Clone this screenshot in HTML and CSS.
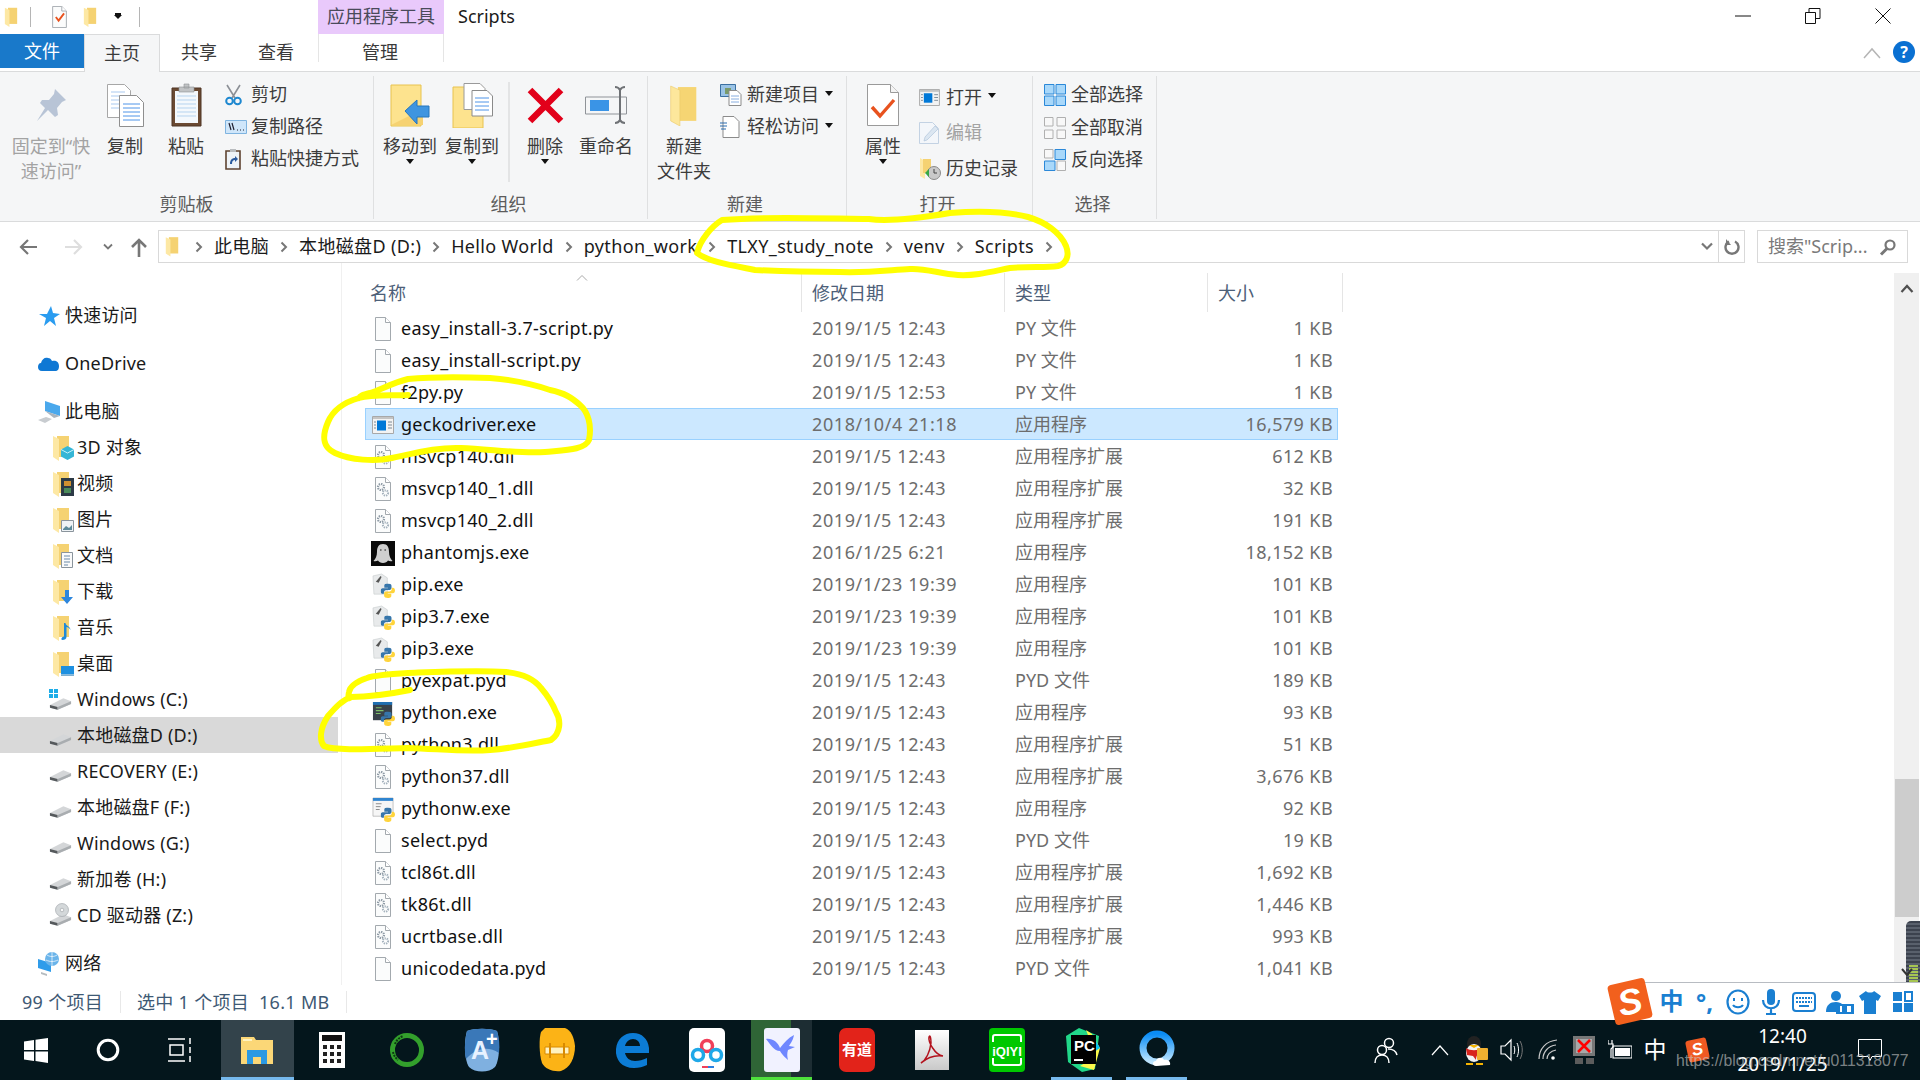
FILE: index.html
```html
<!DOCTYPE html>
<html lang="zh-CN">
<head>
<meta charset="utf-8">
<title>Scripts</title>
<link rel="stylesheet" href="styles.css">
</head>
<body>
<svg class="defs" width="0" height="0" aria-hidden="true">
  <defs>
    <symbol id="folder-v" viewBox="0 0 28 40"><path d="M8 2h18v33H8z" fill="#f6d573"/><path d="M1 1l9 4v35L1 35z" fill="#fde79c" stroke="#eccb6a" stroke-width=".6"/></symbol>
    <symbol id="folder-n" viewBox="0 0 18 26"><path d="M5 1h12v21H5z" fill="#f5d272"/><path d="M1 1l6 3v22l-6-4z" fill="#fde8a4"/></symbol>
    <symbol id="file" viewBox="0 0 18 24"><path d="M1.5.5h10l5 5v18h-15z" fill="#fbfcfc" stroke="#a3a9ae"/><path d="M11.5.5v5h5" fill="#fff" stroke="#a3a9ae"/></symbol>
    <symbol id="dll" viewBox="0 0 18 24"><path d="M1.5.5h10l5 5v18h-15z" fill="#fbfcfc" stroke="#a3a9ae"/><path d="M11.5.5v5h5" fill="#fff" stroke="#a3a9ae"/><circle cx="7" cy="10" r="3" fill="none" stroke="#8f9ba6" stroke-width="2.2" stroke-dasharray="1.4 .9"/><circle cx="11.5" cy="16" r="2.6" fill="none" stroke="#a5b2bd" stroke-width="2" stroke-dasharray="1.3 .9"/></symbol>
    <symbol id="exe" viewBox="0 0 22 18"><path d="M.5.5h21v17H.5z" fill="#f3f3f3" stroke="#a8a8a8"/><path d="M1 1h20v2H1z" fill="#c4c4c4"/><path d="M5 4.500h9v10H5z" fill="#0078d7"/><path d="M16 6h4M16 9h4M16 12h4M2 6h2M2 9h2M2 12h2" stroke="#7c8a96"/></symbol>
    <symbol id="py" viewBox="0 0 14 14"><path d="M7 0C4 0 3.600 1.200 3.600 2.200V4h3.600v.6H2C.8 4.600 0 5.600 0 7.200s.8 2.800 2 2.800h1.200V8.400c0-1.200 1-2.200 2.200-2.200h3.400c1 0 1.800-.8 1.800-1.800V2.200C10.600.8 9 0 7 0z" fill="#3776ab"/><path d="M7 14c3 0 3.400-1.200 3.400-2.200V10H6.800v-.6H12c1.200 0 2-1 2-2.600S13.200 4 12 4h-1.200v1.600c0 1.200-1 2.200-2.200 2.200H5.200c-1 0-1.800.8-1.800 1.800v2.200C3.400 13.200 5 14 7 14z" fill="#ffd43b"/></symbol>
    <symbol id="pip" viewBox="0 0 24 26"><path d="M1 3l9-2 6 4v17H2z" fill="#e8eaeb" stroke="#c4c8cb" stroke-width=".6"/><path d="M4 9l5-6 1 1-3 6z" fill="#555"/><use href="#py" x="9" y="11" width="15" height="15"/></symbol>
    <symbol id="pycon" viewBox="0 0 24 26"><path d="M1 1h20v19H1z" fill="#39424a"/><path d="M1 1h20v3H1z" fill="#1f6fb2"/><path d="M4 7h6M4 10h8M4 13h5" stroke="#7fbf6a" stroke-width="1.300"/><use href="#py" x="9" y="11" width="15" height="15"/></symbol>
    <symbol id="pyw" viewBox="0 0 24 26"><path d="M1 1h21v19H1z" fill="#f6f6f6" stroke="#9a9a9a" stroke-width=".6"/><path d="M1 1h21v3H1z" fill="#2f84cf"/><path d="M4 7h6M4 10h5M4 13h4" stroke="#888"/><use href="#py" x="9" y="11" width="15" height="15"/></symbol>
    <symbol id="ghost" viewBox="0 0 24 25"><path d="M0 0h24v25H0z" fill="#0a0a0a"/><path d="M12 3c-4.500 0-6 3.500-6 8 0 4-1.500 7-3.500 9 2 .5 3.500 0 4.500-.5 1 1.500 2.500 2.500 5 2.500s4-1 5-2.500c1 .5 2.500 1 4.500.5-2-2-3.500-5-3.500-9 0-4.500-1.500-8-6-8z" fill="#cfcfcf"/><circle cx="9.800" cy="9" r=".9" fill="#666"/><circle cx="14.200" cy="9" r=".9" fill="#666"/></symbol>
    <symbol id="drive" viewBox="0 0 24 14"><path d="M1 8l14-7 8 3v3L9 13l-8-2z" fill="#d4d6d8"/><path d="M1 8l8 2v3l-8-2z" fill="#55595c"/><path d="M9 10l14-6v3L9 13z" fill="#a9adb0"/></symbol>
    <symbol id="chev" viewBox="0 0 8 12"><path d="M1.500 1.500L6 6l-4.500 4.500" fill="none" stroke="#777" stroke-width="2"/></symbol>
    <symbol id="grid-s" viewBox="0 0 22 22"><path d="M.5.5h9.500v9.500H.5zM12 .5h9.500v9.500H12zM.5 12h9.500v9.500H.5zM12 12h9.500v9.500H12z" fill="#a9d8fa" stroke="#2b88d8"/></symbol>
    <symbol id="grid-n" viewBox="0 0 22 22"><path d="M.5.5h8.500v8.500H.5zM13 .5h8.500v8.500H13zM.5 13h8.500v8.500H.5zM13 13h8.500v8.500H13z" fill="#f8f8f8" stroke="#b0b0b0"/></symbol>
    <symbol id="grid-i" viewBox="0 0 22 22"><path d="M.5.5h8.500v8.500H.5zM13 12h8.500v9.500H13z" fill="#f8f8f8" stroke="#b0b0b0"/><path d="M11 .5h10.500v10H11zM.5 12h10.500v9.500H.5z" fill="#a9d8fa" stroke="#2b88d8"/></symbol>
  </defs>
</svg>

<header class="titlebar">
  <div class="qa">
    <svg class="qa-f1" width="14" height="20"><use href="#folder-n"/></svg>
    <span class="qa-sep"></span>
    <svg class="qa-doc" width="17" height="22" viewBox="0 0 18 24"><use href="#file"/><path d="M5 12l3 4 6-8" fill="none" stroke="#e8521e" stroke-width="2"/></svg>
    <svg class="qa-f2" width="14" height="20"><use href="#folder-n"/></svg>
    <span class="qa-drop"></span>
    <span class="qa-sep"></span>
  </div>
  <div class="ctx-title">应用程序工具</div>
  <div class="win-title">Scripts</div>
  <div class="winctl">
    <span class="wc"><svg width="16" height="16"><path d="M0 8h16" stroke="#111"/></svg></span>
    <span class="wc"><svg width="16" height="16"><path d="M.5 4.500h10v11H.5zM4 4.500V.5h11v10h-4.500" fill="none" stroke="#111"/></svg></span>
    <span class="wc"><svg width="16" height="16"><path d="M.5.5l15 15M15.500.5l-15 15" stroke="#111"/></svg></span>
  </div>
</header>

<nav class="tabs">
  <div class="tab tab-file">文件</div>
  <div class="tab tab-home">主页</div>
  <div class="tab tab-share">共享</div>
  <div class="tab tab-view">查看</div>
  <div class="tab tab-manage">管理</div>
  <svg class="collapse" width="18" height="12"><path d="M1 11l8-9 8 9" fill="none" stroke="#b5b5b5" stroke-width="1.500"/></svg>
  <span class="help">?</span>
</nav>

<section class="ribbon">
  <div class="group g-clip">
    <div class="group-body">
      <div class="lg w102 off">
        <div class="lg-icon"><svg width="32" height="34" viewBox="0 0 32 34"><path d="M20 1l11 11-4 2-5 6 1 7-3 2-7-7-11 11 8-13-5-5 2-3 7 0 5-6z" fill="#b8c4d6"/></svg></div>
        <div class="lg-label">固定到“快<br>速访问”</div>
      </div>
      <div class="lg w46">
        <div class="lg-icon"><svg width="37" height="43" viewBox="0 0 37 43"><path d="M.5.5h17l6 6v27H.5z" fill="#fff" stroke="#a7a7a7"/><path d="M4 8h14M4 12h16M4 16h16M4 20h16M4 24h16" stroke="#a9c9ef"/><path d="M12.500 11.500h17l7 7v24h-24z" fill="#fff" stroke="#8f8f8f"/><path d="M16 20h17M16 24h17M16 28h17M16 32h17M16 36h17" stroke="#4f94e8"/></svg></div>
        <div class="lg-label">复制</div>
      </div>
      <div class="lg w76">
        <div class="lg-icon"><svg width="31" height="44" viewBox="0 0 31 44"><path d="M1 5h29v38H1z" fill="#6b4a33" stroke="#4e3524"/><path d="M4 8h23v32H4z" fill="#f4f8fc"/><path d="M6 13h19M6 17h19M6 21h19M6 25h19M6 29h19M6 33h19" stroke="#b5d3ef"/><path d="M8 4h15v5H8zM13 1h5v4h-5z" fill="#c1c3c5" stroke="#8f9193" stroke-width=".6"/></svg></div>
        <div class="lg-label">粘贴</div>
      </div>
      <div class="stack st-clip">
        <div class="sm"><span class="sm-icon"><svg width="17" height="22" viewBox="0 0 17 22"><path d="M2 1l8 13M15 1L7 14" stroke="#8c9096" stroke-width="1.600"/><circle cx="4.500" cy="17" r="3.300" fill="none" stroke="#1e88d0" stroke-width="2"/><circle cx="12.500" cy="17" r="3.300" fill="none" stroke="#1e88d0" stroke-width="2"/></svg></span>剪切</div>
        <div class="sm"><span class="sm-icon"><svg width="22" height="14" viewBox="0 0 22 14"><path d="M.5.5h21v13H.5z" fill="#cfe6fa" stroke="#7fb4e0"/><path d="M4 3l2 7M7 3l2 7" stroke="#223" stroke-width="1.200"/><path d="M12 10h1M15 10h1M18 10h1" stroke="#223"/></svg></span>复制路径</div>
        <div class="sm"><span class="sm-icon"><svg width="16" height="22" viewBox="0 0 16 22"><path d="M1 3h14v18H1z" fill="#eef3f8" stroke="#5e4330" stroke-width="1.600"/><path d="M5 1h6v3H5z" fill="#b9bcbf"/><path d="M5 16c0-4 2-6 5-6V8l3 3-3 3v-2c-2 0-3 1-3 4z" fill="#2a5a9e"/></svg></span>粘贴快捷方式</div>
      </div>
    </div>
    <div class="group-label">剪贴板</div>
  </div>

  <div class="group g-org">
    <div class="group-body">
      <div class="lg w72">
        <div class="lg-icon"><svg width="40" height="43" viewBox="0 0 40 43"><path d="M1 1h30v41H1z" fill="#fde38e" stroke="#e8c34e"/><path d="M23 30h10v11H1" fill="#f6d272"/><path d="M15 27L27 16v6h12v11H27v7z" fill="#3f95e0" stroke="#2676bd"/></svg></div>
        <div class="lg-label">移动到</div><span class="caret"></span>
      </div>
      <div class="lg w52">
        <div class="lg-icon"><svg width="41" height="45" viewBox="0 0 41 45"><path d="M1 4h30v41H1z" fill="#fde38e" stroke="#e8c34e"/><path d="M12 .5h16l5 5v21H12z" fill="#fff" stroke="#9a9a9a"/><path d="M20 7.500h15l5.500 5.500v20H20z" fill="#fff" stroke="#8a8a8a"/><path d="M23 15h14M23 19h14M23 23h14M23 27h14" stroke="#4f94e8"/></svg></div>
        <div class="lg-label">复制到</div><span class="caret"></span>
      </div>
      <span class="inner-sep"></span>
      <div class="lg w70">
        <div class="lg-icon"><svg width="37" height="37" viewBox="0 0 37 37"><path d="M3 3l31 31M34 3L3 34" stroke="#e2001a" stroke-width="6.500"/></svg></div>
        <div class="lg-label">删除</div><span class="caret"></span>
      </div>
      <div class="lg w52">
        <div class="lg-icon"><svg width="42" height="38" viewBox="0 0 42 38"><path d="M.5 11h41v17H.5z" fill="#f5f6f7" stroke="#8f9398"/><path d="M5 14h19v11H5z" fill="#3a94e6"/><path d="M30 1c2 0 4 1 5 3v30c-1 2-3 3-5 3M40 1c-2 0-4 1-5 3v30c1 2 3 3 5 3" fill="none" stroke="#6f7276" stroke-width="2"/></svg></div>
        <div class="lg-label">重命名</div>
      </div>
    </div>
    <div class="group-label">组织</div>
  </div>

  <div class="group g-new">
    <div class="group-body">
      <div class="lg w72">
        <div class="lg-icon"><svg width="30" height="41"><use href="#folder-v"/></svg></div>
        <div class="lg-label">新建<br>文件夹</div>
      </div>
      <div class="stack st-new">
        <div class="sm"><span class="sm-icon"><svg width="22" height="22" viewBox="0 0 22 22"><path d="M.5.5h15v12H.5z" fill="#9ac3e6" stroke="#3b6fa0"/><path d="M5 4h6v6H5z" fill="#7a9a6a"/><path d="M9 6.500h8l4 4v11H9z" fill="#fff" stroke="#8b8b8b"/><path d="M11 12h8M11 15h8M11 18h8" stroke="#88aee0"/></svg></span>新建项目<span class="caret caret-in"></span></div>
        <div class="sm"><span class="sm-icon"><svg width="20" height="22" viewBox="0 0 20 22"><path d="M3 .5h11l5 5v16H3z" fill="#fff" stroke="#8b8b8b"/><path d="M0 7h7M0 10h7M1 13h5" stroke="#2a6db0"/></svg></span>轻松访问<span class="caret caret-in"></span></div>
      </div>
    </div>
    <div class="group-label">新建</div>
  </div>

  <div class="group g-open">
    <div class="group-body">
      <div class="lg w72">
        <div class="lg-icon"><svg width="32" height="42" viewBox="0 0 32 42"><path d="M.5.5h23l8 8v33H.5z" fill="#fff" stroke="#9a9a9a"/><path d="M23.500.5v8h8" fill="#f4f4f4" stroke="#9a9a9a"/><path d="M5 23l8 9 14-16" fill="none" stroke="#e8521e" stroke-width="3.400"/></svg></div>
        <div class="lg-label">属性</div><span class="caret"></span>
      </div>
      <div class="stack st-open">
        <div class="sm sm-t"><span class="sm-icon"><svg width="21" height="17"><use href="#exe"/></svg></span>打开<span class="caret caret-in"></span></div>
        <div class="sm sm-t off"><span class="sm-icon"><svg width="20" height="22" viewBox="0 0 20 22"><path d="M.5.5h13l6 6v15H.5z" fill="#f3f6fa" stroke="#c3d2e3"/><path d="M5 19l1-4L16 4l3 3L8 18z" fill="#dbe6f1" stroke="#aac0d6" stroke-width=".6"/></svg></span>编辑</div>
        <div class="sm sm-t"><span class="sm-icon"><svg width="22" height="22" viewBox="0 0 22 22"><path d="M1 0l5 3v18l-5-3z" fill="#fde8a4"/><path d="M4 1h8v14H4z" fill="#f5d272"/><circle cx="15" cy="15" r="6.500" fill="#c9c9c9" stroke="#8a8a8a"/><path d="M15 11v4h3" stroke="#444" fill="none"/><path d="M6 15l4-4v8z" fill="#39a845"/></svg></span>历史记录</div>
      </div>
    </div>
    <div class="group-label">打开</div>
  </div>

  <div class="group g-sel">
    <div class="group-body">
      <div class="stack st-new st-sel">
        <div class="sm"><span class="sm-icon"><svg width="22" height="22"><use href="#grid-s"/></svg></span>全部选择</div>
        <div class="sm"><span class="sm-icon"><svg width="22" height="22"><use href="#grid-n"/></svg></span>全部取消</div>
        <div class="sm"><span class="sm-icon"><svg width="22" height="22"><use href="#grid-i"/></svg></span>反向选择</div>
      </div>
    </div>
    <div class="group-label">选择</div>
  </div>
</section>

<div class="addr">
  <svg class="nav-btn back" width="20" height="18" viewBox="0 0 20 18"><path d="M19 9H3M10 2L3 9l7 7" fill="none" stroke="#777" stroke-width="2.200"/></svg>
  <svg class="nav-btn fwd" width="20" height="18" viewBox="0 0 20 18"><path d="M1 9h16M10 2l7 7-7 7" fill="none" stroke="#dedede" stroke-width="2.200"/></svg>
  <svg class="nav-btn hist" width="10" height="8" viewBox="0 0 10 8"><path d="M1 1.500l4 4 4-4" fill="none" stroke="#777" stroke-width="1.800"/></svg>
  <svg class="nav-btn up" width="18" height="20" viewBox="0 0 18 20"><path d="M9 20V3M2 10l7-7 7 7" fill="none" stroke="#777" stroke-width="2.600"/></svg>
  <div class="crumbs">
    <svg class="cr-folder" width="14" height="21"><use href="#folder-n"/></svg>
    <svg class="cr-chev" width="8" height="12"><use href="#chev"/></svg>
    <span>此电脑</span>
    <svg class="cr-chev" width="8" height="12"><use href="#chev"/></svg>
    <span>本地磁盘D (D:)</span>
    <svg class="cr-chev" width="8" height="12"><use href="#chev"/></svg>
    <span>Hello World</span>
    <svg class="cr-chev" width="8" height="12"><use href="#chev"/></svg>
    <span>python_work</span>
    <svg class="cr-chev" width="8" height="12"><use href="#chev"/></svg>
    <span>TLXY_study_note</span>
    <svg class="cr-chev" width="8" height="12"><use href="#chev"/></svg>
    <span>venv</span>
    <svg class="cr-chev" width="8" height="12"><use href="#chev"/></svg>
    <span>Scripts</span>
    <svg class="cr-chev" width="8" height="12"><use href="#chev"/></svg>
    <svg class="cr-drop" width="12" height="9" viewBox="0 0 12 9"><path d="M1 1.500l5 5 5-5" fill="none" stroke="#777" stroke-width="2.200"/></svg>
    <span class="cr-refresh"><svg width="16" height="18" viewBox="0 0 16 18"><path d="M5 3.500a6.500 6.500 0 1 0 6 0" fill="none" stroke="#777" stroke-width="2.400"/><path d="M2 1v6h5z" fill="#777"/></svg></span>
  </div>
  <div class="search">
    <span>搜索"Scrip...</span>
    <svg width="18" height="18" viewBox="0 0 18 18"><circle cx="11" cy="7" r="4.500" fill="none" stroke="#777" stroke-width="2.200"/><path d="M8 10.500L2 16.500" stroke="#777" stroke-width="3"/></svg>
  </div>
</div>

<main class="main">
  <aside class="side">
    <div class="si top"><svg class="si-i" width="22" height="20" viewBox="0 0 22 20"><path d="M13 0l2 7 7 1-6 4 2 8-6-5-6 5 2-8-7-4h8z" fill="#2a9cf0"/></svg>快速访问</div>
    <div class="si top"><svg class="si-i" width="22" height="16" viewBox="0 0 22 16"><path d="M4 15C1 15 0 13 0 11s1-4 3-4c1-4 4-6 7-5 2 0 3 1 4 3 3-1 7 0 7 5 0 3-1 5-4 5z" fill="#0f78d4"/></svg>OneDrive</div>
    <div class="si top"><svg class="si-i" width="22" height="22" viewBox="0 0 22 22"><path d="M7 0l15 5v10L7 10z" fill="#4aa8ec"/><path d="M7 10l15 5-6 2z" fill="#aab4bd"/><path d="M0 19l8-3 6 2-7 4z" fill="#c8ccd0"/></svg>此电脑</div>
    <div class="si"><span class="fold"><svg width="18" height="26"><use href="#folder-n"/></svg><svg class="badge" width="13" height="14" viewBox="0 0 13 14"><path d="M6.500 0L13 3.500v7L6.500 14 0 10.500v-7z" fill="#35b6d6"/><path d="M0 3.500l6.500 3.500L13 3.500" fill="none" stroke="#c9f1fa"/></svg></span>3D 对象</div>
    <div class="si"><span class="fold"><svg width="18" height="26"><use href="#folder-n"/></svg><svg class="badge" width="13" height="18" viewBox="0 0 13 18"><path d="M0 0h13v18H0z" fill="#2c3a46"/><path d="M3 3h7v5H3z" fill="#d09030"/><path d="M3 10h7v5H3z" fill="#4a8a5a"/></svg></span>视频</div>
    <div class="si"><span class="fold"><svg width="18" height="26"><use href="#folder-n"/></svg><svg class="badge" width="13" height="12" viewBox="0 0 13 12"><path d="M.5.5h12v11H.5z" fill="#eef2f5" stroke="#8a949c"/><path d="M2 9l3-3 3 2 3-3v5H2z" fill="#5c8a9a"/></svg></span>图片</div>
    <div class="si"><span class="fold"><svg width="18" height="26"><use href="#folder-n"/></svg><svg class="badge" width="12" height="16" viewBox="0 0 12 16"><path d="M.5.5h11v15H.5z" fill="#fafafa" stroke="#8a949c"/><path d="M3 4h6M3 7h6M3 10h6M3 13h4" stroke="#6a8aa8"/></svg></span>文档</div>
    <div class="si"><span class="fold"><svg width="18" height="26"><use href="#folder-n"/></svg><svg class="badge" width="12" height="14" viewBox="0 0 12 14"><path d="M4 0h4v7h4l-6 7-6-7h4z" fill="#2d86dc"/></svg></span>下载</div>
    <div class="si"><span class="fold"><svg width="18" height="26"><use href="#folder-n"/></svg><svg class="badge" width="10" height="18" viewBox="0 0 10 18"><path d="M3 1h1.500c0 3 5 3 5 7-1-2-2.500-3-4-3v10c0 2-2 3-4 3-1.500 0-1.500-2 0-3 1-.5 1.500-.5 1.500-.5z" fill="#1f8ad8"/></svg></span>音乐</div>
    <div class="si"><span class="fold"><svg width="18" height="26"><use href="#folder-n"/></svg><svg class="badge" width="13" height="10" viewBox="0 0 13 10"><path d="M0 0h13v8.500H0z" fill="#1e90e0"/><path d="M0 8.500h13V10H0z" fill="#7fb0d0"/></svg></span>桌面</div>
    <div class="si"><span class="fold"><svg class="drv" width="23" height="14"><use href="#drive"/></svg><svg class="badge-win" width="9" height="9" viewBox="0 0 9 9"><path d="M0 0h4v4H0zM5 0h4v4H5zM0 5h4v4H0zM5 5h4v4H5z" fill="#1dade8"/></svg></span>Windows (C:)</div>
    <div class="si sel"><span class="fold"><svg class="drv" width="23" height="14"><use href="#drive"/></svg></span>本地磁盘D (D:)</div>
    <div class="si"><span class="fold"><svg class="drv" width="23" height="14"><use href="#drive"/></svg></span>RECOVERY (E:)</div>
    <div class="si"><span class="fold"><svg class="drv" width="23" height="14"><use href="#drive"/></svg></span>本地磁盘F (F:)</div>
    <div class="si"><span class="fold"><svg class="drv" width="23" height="14"><use href="#drive"/></svg></span>Windows (G:)</div>
    <div class="si"><span class="fold"><svg class="drv" width="23" height="14"><use href="#drive"/></svg></span>新加卷 (H:)</div>
    <div class="si"><span class="fold"><svg class="drv" width="23" height="14"><use href="#drive"/></svg><svg class="badge-cd" width="14" height="14" viewBox="0 0 14 14"><circle cx="7" cy="7" r="6.500" fill="#d4d8da" stroke="#9aa0a4" stroke-width=".6"/><circle cx="7" cy="7" r="1.800" fill="#f7f7f7" stroke="#9aa0a4" stroke-width=".6"/></svg></span>CD 驱动器 (Z:)</div>
    <div class="si top"><svg class="si-i" width="22" height="26" viewBox="0 0 22 26"><path d="M0 8l13 4v9L0 17z" fill="#2f9cea"/><circle cx="14" cy="8" r="7" fill="#6ab4ea"/><path d="M9 4c3 2 7 2 10 0M8 9c4 2 8 2 12 0M14 1v14" stroke="#fff" stroke-width=".7" fill="none"/><path d="M3 21l6 2v2l-6-2z" fill="#b6bcc0"/></svg>网络</div>
  </aside>

  <div class="list">
    <div class="head">
      <div class="hc hc-name">名称<svg class="sort" width="12" height="6" viewBox="0 0 12 6"><path d="M1 5.500l5-5 5 5" fill="none" stroke="#a8a8a8"/></svg></div>
      <div class="hc">修改日期</div>
      <div class="hc">类型</div>
      <div class="hc">大小</div>
    </div>
    <div class="row"><span class="nm"><span class="ic"><svg width="18" height="24"><use href="#file"/></svg></span>easy_install-3.7-script.py</span><span class="dt">2019/1/5 12:43</span><span>PY 文件</span><span class="sz">1 KB</span></div>
    <div class="row"><span class="nm"><span class="ic"><svg width="18" height="24"><use href="#file"/></svg></span>easy_install-script.py</span><span class="dt">2019/1/5 12:43</span><span>PY 文件</span><span class="sz">1 KB</span></div>
    <div class="row"><span class="nm"><span class="ic"><svg width="18" height="24"><use href="#file"/></svg></span>f2py.py</span><span class="dt">2019/1/5 12:53</span><span>PY 文件</span><span class="sz">1 KB</span></div>
    <div class="row chosen"><span class="nm"><span class="ic"><svg width="22" height="18"><use href="#exe"/></svg></span>geckodriver.exe</span><span class="dt">2018/10/4 21:18</span><span>应用程序</span><span class="sz">16,579 KB</span></div>
    <div class="row"><span class="nm"><span class="ic"><svg width="18" height="24"><use href="#dll"/></svg></span>msvcp140.dll</span><span class="dt">2019/1/5 12:43</span><span>应用程序扩展</span><span class="sz">612 KB</span></div>
    <div class="row"><span class="nm"><span class="ic"><svg width="18" height="24"><use href="#dll"/></svg></span>msvcp140_1.dll</span><span class="dt">2019/1/5 12:43</span><span>应用程序扩展</span><span class="sz">32 KB</span></div>
    <div class="row"><span class="nm"><span class="ic"><svg width="18" height="24"><use href="#dll"/></svg></span>msvcp140_2.dll</span><span class="dt">2019/1/5 12:43</span><span>应用程序扩展</span><span class="sz">191 KB</span></div>
    <div class="row"><span class="nm"><span class="ic"><svg width="24" height="25"><use href="#ghost"/></svg></span>phantomjs.exe</span><span class="dt">2016/1/25 6:21</span><span>应用程序</span><span class="sz">18,152 KB</span></div>
    <div class="row"><span class="nm"><span class="ic"><svg width="23" height="25"><use href="#pip"/></svg></span>pip.exe</span><span class="dt">2019/1/23 19:39</span><span>应用程序</span><span class="sz">101 KB</span></div>
    <div class="row"><span class="nm"><span class="ic"><svg width="23" height="25"><use href="#pip"/></svg></span>pip3.7.exe</span><span class="dt">2019/1/23 19:39</span><span>应用程序</span><span class="sz">101 KB</span></div>
    <div class="row"><span class="nm"><span class="ic"><svg width="23" height="25"><use href="#pip"/></svg></span>pip3.exe</span><span class="dt">2019/1/23 19:39</span><span>应用程序</span><span class="sz">101 KB</span></div>
    <div class="row"><span class="nm"><span class="ic"><svg width="18" height="24"><use href="#file"/></svg></span>pyexpat.pyd</span><span class="dt">2019/1/5 12:43</span><span>PYD 文件</span><span class="sz">189 KB</span></div>
    <div class="row"><span class="nm"><span class="ic"><svg width="23" height="25"><use href="#pycon"/></svg></span>python.exe</span><span class="dt">2019/1/5 12:43</span><span>应用程序</span><span class="sz">93 KB</span></div>
    <div class="row"><span class="nm"><span class="ic"><svg width="18" height="24"><use href="#dll"/></svg></span>python3.dll</span><span class="dt">2019/1/5 12:43</span><span>应用程序扩展</span><span class="sz">51 KB</span></div>
    <div class="row"><span class="nm"><span class="ic"><svg width="18" height="24"><use href="#dll"/></svg></span>python37.dll</span><span class="dt">2019/1/5 12:43</span><span>应用程序扩展</span><span class="sz">3,676 KB</span></div>
    <div class="row"><span class="nm"><span class="ic"><svg width="23" height="25"><use href="#pyw"/></svg></span>pythonw.exe</span><span class="dt">2019/1/5 12:43</span><span>应用程序</span><span class="sz">92 KB</span></div>
    <div class="row"><span class="nm"><span class="ic"><svg width="18" height="24"><use href="#file"/></svg></span>select.pyd</span><span class="dt">2019/1/5 12:43</span><span>PYD 文件</span><span class="sz">19 KB</span></div>
    <div class="row"><span class="nm"><span class="ic"><svg width="18" height="24"><use href="#dll"/></svg></span>tcl86t.dll</span><span class="dt">2019/1/5 12:43</span><span>应用程序扩展</span><span class="sz">1,692 KB</span></div>
    <div class="row"><span class="nm"><span class="ic"><svg width="18" height="24"><use href="#dll"/></svg></span>tk86t.dll</span><span class="dt">2019/1/5 12:43</span><span>应用程序扩展</span><span class="sz">1,446 KB</span></div>
    <div class="row"><span class="nm"><span class="ic"><svg width="18" height="24"><use href="#dll"/></svg></span>ucrtbase.dll</span><span class="dt">2019/1/5 12:43</span><span>应用程序扩展</span><span class="sz">993 KB</span></div>
    <div class="row"><span class="nm"><span class="ic"><svg width="18" height="24"><use href="#file"/></svg></span>unicodedata.pyd</span><span class="dt">2019/1/5 12:43</span><span>PYD 文件</span><span class="sz">1,041 KB</span></div>
  </div>

  <div class="vscroll">
    <svg class="vs-up" width="14" height="9" viewBox="0 0 14 9"><path d="M1.500 8L7 2l5.500 6" fill="none" stroke="#505050" stroke-width="2.200"/></svg>
    <div class="vs-thumb"></div>
  </div>
</main>

<footer class="status">
  <span class="st-a">99 个项目</span>
  <span class="st-b">选中 1 个项目&nbsp;&nbsp;16.1 MB</span>
</footer>

<div class="taskbar">
  <span class="tb s72"><svg width="24" height="25" viewBox="0 0 24 25"><path d="M0 3.500l10-1.500v10H0zM11.500 1.800L24 0v12H11.500zM0 13.500h10V23L0 21.500zM11.500 13.500H24V25l-12.500-2z" fill="#fff"/></svg></span>
  <span class="tb s72"><svg width="24" height="24" viewBox="0 0 24 24"><circle cx="12" cy="12" r="9.800" fill="none" stroke="#fff" stroke-width="3"/></svg></span>
  <span class="tb s77"><svg width="24" height="24" viewBox="0 0 24 24"><path d="M0 1h17M0 23h17M2 7h13v10H2zM22 0v6M22 9v6M22 18v6" fill="none" stroke="#fff" stroke-width="1.500"/></svg></span>
  <span class="tb s73 active-exp"><svg width="32" height="28" viewBox="0 0 32 28"><path d="M0 1h13l2 3h17v24H0z" fill="#fbd777"/><path d="M2 3h9v2H2z" fill="#fff3c0"/><path d="M6 28V14h20v14h-6v-7h-8v7z" fill="#2b99e3"/></svg></span>
  <span class="tb"><svg width="26" height="36" viewBox="0 0 26 36"><path d="M0 0h26v36H0z" fill="#fff"/><path d="M3 3h20v6H3z" fill="#111"/><path d="M4 13h4v4H4zM11 13h4v4h-4zM18 13h4v4h-4zM4 20h4v4H4zM11 20h4v4h-4zM18 20h4v4h-4zM4 27h4v4H4zM11 27h4v4h-4zM18 27h4v4h-4z" fill="#222"/></svg></span>
  <span class="tb"><svg width="36" height="36" viewBox="0 0 36 36"><circle cx="18" cy="18" r="14.500" fill="none" stroke="#33a02c" stroke-width="5"/><path d="M6 12a14 14 0 0 1 8-8M4 20a14 14 0 0 0 5 8" stroke="#0d3a12" stroke-width="2" fill="none" stroke-dasharray="2 1"/></svg></span>
  <span class="tb"><svg width="36" height="44" viewBox="0 0 36 44"><path d="M3 3C10 0 26 0 33 3c3 10 3 28-2 36-6 6-20 6-26 0C0 31 0 13 3 3z" fill="#7fb0e0"/><path d="M3 3c7-3 23-3 30 0 2 6 3 14 2 22-12-8-24-4-33 6-2-9-1-20 1-28z" fill="#3a78b8"/><text x="7" y="31" class="ti ti-a">A</text><text x="22" y="18" class="ti ti-p">+</text></svg></span>
  <span class="tb"><svg width="36" height="44" viewBox="0 0 36 44"><path d="M6 0h20c6 2 9 9 10 18 0 12-5 22-14 25-8 1-16-2-19-8C0 26 0 10 2 4z" fill="#fcb316"/><path d="M6 19h24v7H6z" fill="#fff2c0"/><path d="M11 15v15M25 15v15" stroke="#d88a00" stroke-width="2"/><path d="M6 19h24v7H6z" fill="none" stroke="#d88a00"/></svg></span>
  <span class="tb"><svg width="36" height="36" viewBox="0 0 36 36"><path d="M2 17C3 7 10 1 19 1c9 0 15 6 16 15v5H11c1 5 5 8 10 8 4 0 8-1 12-3v7c-4 2-8 3-13 3C8 36 1 28 2 17zm9-3h15c0-4-3-7-7-7s-7 3-8 7z" fill="#0c7cd5"/></svg></span>
  <span class="tb"><svg width="36" height="44" viewBox="0 0 36 44"><rect width="36" height="44" rx="5" fill="#fff"/><circle cx="18" cy="18" r="5.500" fill="none" stroke="#f0405a" stroke-width="3.500"/><circle cx="9" cy="27" r="5.500" fill="none" stroke="#1fa8e8" stroke-width="3.500"/><circle cx="27" cy="27" r="5.500" fill="none" stroke="#1fa8e8" stroke-width="3.500"/><path d="M13 38h6v2h-6z" fill="#f0405a"/><path d="M19 38h6v2h-6z" fill="#2a7fe0"/></svg></span>
  <span class="tb"><span class="tb-mark mark-green"><svg width="36" height="44" viewBox="0 0 36 44"><rect width="36" height="44" rx="3" fill="#f1f2ff"/><path d="M2 11c6-1 12 3 14 9 4-5 8-10 14-13-1 6-4 9-5 11l6 1-7 3c-1 3-1 6 0 10-3-3-5-4-8-9-6 0-9-6-14-12z" fill="#6f87ff"/></svg></span></span>
  <span class="tb"><svg width="36" height="44" viewBox="0 0 36 44"><rect width="36" height="44" rx="7" fill="#e2231a"/><text x="18" y="27" text-anchor="middle" class="ti ti-yd">有道</text></svg></span>
  <span class="tb"><svg width="34" height="40" viewBox="0 0 34 40"><defs><linearGradient id="acro" x1="0" y1="0" x2="0" y2="1"><stop offset="0" stop-color="#fff"/><stop offset="1" stop-color="#c9c9c9"/></linearGradient></defs><path d="M0 0h34v40H0z" fill="url(#acro)"/><path d="M6 33c5-3 9-11 10-20 0-5-1-9-2-6-1 5 6 18 14 19-7-1-15 1-22 7z" fill="none" stroke="#b3121d" stroke-width="1.500"/></svg></span>
  <span class="tb"><svg width="36" height="44" viewBox="0 0 36 44"><rect width="36" height="44" rx="4" fill="#00c800"/><path d="M4 14V9c0-1 1-2 2-2h24c1 0 2 1 2 2v5M4 30v5c0 1 1 2 2 2h24c1 0 2-1 2-2v-5" fill="none" stroke="#fff" stroke-width="2"/><text x="18" y="28" text-anchor="middle" class="ti ti-iq">iQIYI</text></svg></span>
  <span class="tb"><span class="tb-mark mark-blue"><svg width="36" height="44" viewBox="0 0 36 44"><path d="M2 8L15 0l20 8-4 33-13 3L4 34z" fill="#21d789"/><path d="M22 2l6 4 8 14-6 22-14-4 16-10z" fill="#fcf84a"/><path d="M28 6l8 14-6 4z" fill="#07c3f2"/><path d="M7 7h25v29H7z" fill="#000"/><text x="10" y="23" class="ti ti-pc">PC</text><path d="M10 31h9v2h-9z" fill="#fff"/></svg></span></span>
  <span class="tb"><span class="tb-mark mark-blue"><svg width="36" height="44" viewBox="0 0 36 44"><defs><linearGradient id="qg" x1="0" y1="0" x2="0" y2="1"><stop offset="0" stop-color="#0a8cf5"/><stop offset="1" stop-color="#bfe6ff"/></linearGradient></defs><circle cx="18" cy="20" r="14" fill="none" stroke="url(#qg)" stroke-width="7"/><path d="M17 38c-4 0-4-5 0-5 1-4 7-4 8-1 4-1 7 2 6 5z" fill="#fff"/></svg></span></span>

  <div class="tray">
    <span class="tr mr18"><svg width="24" height="27" viewBox="0 0 24 27"><circle cx="15" cy="6" r="4.500" fill="none" stroke="#fff" stroke-width="1.500"/><circle cx="8" cy="13" r="4.500" fill="none" stroke="#fff" stroke-width="1.500"/><path d="M1 26c0-5 3-8 7-8s7 3 7 8M14 12c4 0 8 2 9 6" fill="none" stroke="#fff" stroke-width="1.500"/></svg></span>
    <span class="tr"><svg width="18" height="11" viewBox="0 0 18 11"><path d="M1 10l8-9 8 9" fill="none" stroke="#fff" stroke-width="1.200"/></svg></span>
    <span class="tr"><svg width="24" height="30" viewBox="0 0 24 30"><ellipse cx="10" cy="9" rx="7" ry="8" fill="#222"/><ellipse cx="10" cy="18" rx="8" ry="9" fill="#f4f4f4"/><path d="M2 13c4 3 12 3 16 0v4c-4 2-6 3-6 8l-3-4-6-1z" fill="#d8241c"/><path d="M5 10h10l-5 3z" fill="#f5b301"/><path d="M2 29h7M12 29h7" stroke="#f5b301" stroke-width="2"/><rect x="13" y="13" width="11" height="12" rx="1" fill="#f0b030"/></svg></span>
    <span class="tr"><svg width="24" height="24" viewBox="0 0 24 24"><path d="M1 8h4l6-6v20l-6-6H1z" fill="none" stroke="#fff" stroke-width="1.200"/><path d="M14 8c1 2 1 6 0 8M17 5c2 4 2 10 0 14" fill="none" stroke="#fff"/><path d="M20 3c3 5 3 13 0 18" fill="none" stroke="#777"/></svg></span>
    <span class="tr"><svg width="20" height="22" viewBox="0 0 20 22"><path d="M1 20C1 10 8 2 19 1M5 20c0-7 5-13 13-14M9 20c0-4 3-8 9-9" fill="none" stroke="#c8c8c8" stroke-width="1.200"/><circle cx="15" cy="19" r="1.800" fill="#fff"/></svg></span>
    <span class="tr"><svg width="22" height="29" viewBox="0 0 22 29"><path d="M0 0h22v20H0z" fill="#777"/><path d="M3 3h16v14H3z" fill="#a8a8a8"/><path d="M5 4l12 12M17 4L5 16" stroke="#f00" stroke-width="2.500"/><path d="M2 22h8v6H2zM13 22h8v6h-8z" fill="#5c5c5c"/></svg></span>
    <span class="tr"><svg width="24" height="20" viewBox="0 0 24 20"><path d="M5 6h19v12H5z" fill="none" stroke="#fff" stroke-width="1.200"/><path d="M7 8h15v8H7z" fill="#fff"/><path d="M0 0v4M4 0v4M-1 4h6v3l-2 2v9" fill="none" stroke="#fff" stroke-width="1.200"/></svg></span>
    <span class="tr tr-ime mr7">中</span>
    <span class="tr mr15"><span class="s-mini">S</span></span>
    <div class="clock"><span>12:40</span><span>2019/1/25</span></div>
    <span class="tr"><svg width="24" height="22" viewBox="0 0 24 22"><path d="M.5.5h23v17H14l-2 4-2-4H.5z" fill="none" stroke="#fff"/></svg></span>
  </div>
</div>

<div class="gadget"></div>
<svg class="gadget-v" width="12" height="9" viewBox="0 0 12 9"><path d="M1 1l5 6 5-6" fill="none" stroke="#333" stroke-width="2"/></svg>

<div class="sogou">
  <span class="sg-logo">S</span>
  <span class="sg sg-zh">中</span>
  <span class="sg sg-p">°,</span>
  <span class="sg"><svg width="24" height="26" viewBox="0 0 24 26"><ellipse cx="12" cy="13" rx="10.500" ry="11.500" fill="none" stroke="#1a7fd1" stroke-width="2.200"/><path d="M8 9v3M16 9v3" stroke="#1a7fd1" stroke-width="2"/><path d="M7 16c2 3 8 3 10 0" fill="none" stroke="#1a7fd1" stroke-width="2"/></svg></span>
  <span class="sg"><svg width="20" height="26" viewBox="0 0 20 26"><rect x="6" y="0" width="8" height="16" rx="4" fill="#1a7fd1"/><path d="M2 11c0 11 16 11 16 0M10 19v5M5 25h10" fill="none" stroke="#1a7fd1" stroke-width="2.200"/></svg></span>
  <span class="sg"><svg width="24" height="20" viewBox="0 0 24 20"><rect x="1" y="1" width="22" height="18" rx="3" fill="none" stroke="#1a7fd1" stroke-width="2"/><path d="M4 6h16M4 10h16" stroke="#1a7fd1" stroke-width="2" stroke-dasharray="2 1"/><path d="M7 14h10" stroke="#1a7fd1" stroke-width="2"/></svg></span>
  <span class="sg sg-ps"><svg width="28" height="24" viewBox="0 0 28 24"><circle cx="10" cy="6" r="5" fill="#1a7fd1"/><path d="M0 22c0-7 4-10 10-10 3 0 5 1 6 2v8z" fill="#1a7fd1"/><path d="M10 14h18v10H10z" fill="#1a7fd1"/><path d="M14 16v6h2v-6zM21 16h4v6h-4z" fill="#fff"/></svg></span>
  <span class="sg"><svg width="22" height="24" viewBox="0 0 22 24"><path d="M7 1c1 2 7 2 8 0l7 5-3 5-2-1v14H5V10l-2 1-3-5z" fill="#1a7fd1"/></svg></span>
  <span class="sg"><svg width="20" height="24" viewBox="0 0 20 24"><path d="M0 2h9v9H0zM0 13h9v9H0zM11 13h9v9h-9z" fill="#1a7fd1"/><path d="M12 2h7v9h-7z" fill="none" stroke="#1a7fd1" stroke-width="2"/></svg></span>
</div>

<div class="watermark">https://blog.csdn.net/u011318077</div>

<svg class="marks" width="1920" height="1080" viewBox="0 0 1920 1080" aria-hidden="true">
  <path d="M697 253C700 240 712 226 722 220C760 217 811 218 869 219C890 222 920 218 950 213C975 211 1005 211 1028 217C1045 222 1060 232 1066 246C1070 256 1066 264 1058 266C1045 268 1030 266 1010 268C990 272 975 276 958 275C940 274 926 268 910 269C890 270 869 273 840 272C800 272 775 271 755 270C735 266 708 262 697 253Z"/>
  <path d="M408 395C390 396 372 394 359 398C345 402 333 410 328 422C322 436 322 447 335 453C350 460 375 462 392 458C420 452 440 447 461 448C490 449 520 454 545 452C565 450 585 450 589 440C592 425 588 412 580 405C572 398 565 393 550 390C530 383 515 380 490 378C460 377 430 377 408 379C392 383 380 390 370 393C362 395 360 396 359 398"/>
  <path d="M410 690C390 694 370 697 351 697C342 700 335 708 328 716C320 728 319 740 324 746C335 751 370 749 408 748C440 749 465 752 490 750C515 748 535 743 551 740C561 733 561 720 556 712C552 702 547 695 541 688C535 680 525 674 506 672C475 670 435 672 408 673C390 674 375 675 367 678C355 682 350 686 349 692C348 697 348 700 351 697"/>
</svg>
</body>
</html>
```

FILE: styles.css
```css
* { box-sizing: border-box; }
html, body { margin: 0; padding: 0; }
body {
  position: relative;
  width: 1920px;
  height: 1080px;
  overflow: hidden;
  display: flex;
  flex-direction: column;
  background: #fff;
  color: #1a1a1a;
  font: 18px/1.2 "Noto Sans", "Noto Sans CJK SC", sans-serif;
}
svg { display: block; flex: none; }
.defs { position: absolute; }

/* title bar */
.titlebar { height: 34px; display: flex; flex: none; }
.qa { width: 318px; display: flex; align-items: center; padding-left: 4px; }
.qa-sep { width: 1px; height: 20px; background: #b5b5b5; }
.qa-f1 { margin-right: 12px; }
.qa-doc { margin: 0 15px 0 20px; }
.qa-f2 { margin-right: 17px; }
.qa-drop { width: 0; height: 0; border: 4px solid transparent; border-top: 4px solid #111; border-bottom: 0; margin-right: 17px; box-shadow: 0 -3px 0 -1px #111; }
.ctx-title { width: 126px; background: #e9c9fb; color: #4a4a5a; text-align: center; line-height: 32px; }
.win-title { padding-left: 14px; line-height: 33px; color: #1a1a1a; }
.winctl { margin-left: auto; display: flex; margin-right: 2px; }
.wc { width: 70px; display: flex; justify-content: center; padding-top: 8px; }

/* tabs */
.tabs { height: 37px; display: flex; flex: none; position: relative; align-items: flex-start; }
.tab { height: 37px; text-align: center; line-height: 36px; color: #3a3a3a; }
.tab-file { width: 84px; height: 34px; line-height: 34px; background: #1979ca; color: #fff; }
.tab-home { width: 76px; height: 38px; background: #f5f6f7; border: 1px solid #dadbdc; border-bottom: 0; position: relative; z-index: 1; }
.tab-share { width: 78px; }
.tab-view { width: 76px; margin-right: 4px; }
.tab-manage { width: 126px; padding-right: 2px; border-left: 1px solid #e5e5e5; border-right: 1px solid #e5e5e5; height: 28px; line-height: 36px; overflow: visible; }
.collapse { margin: 13px 0 0 auto; }
.help { width: 22px; height: 22px; margin: 7px 5px 0 12px; border-radius: 50%; background: #0a70d2; color: #fff; text-align: center; font: bold 16px/22px "Noto Sans", sans-serif; }

/* ribbon */
.ribbon { height: 151px; flex: none; display: flex; background: #f5f6f7; border-top: 1px solid #dadbdc; border-bottom: 1px solid #dadbdc; padding-top: 4px; color: #3c3c3c; }
.group { display: flex; flex-direction: column; height: 143px; border-right: 1px solid #dfe0e1; }
.group-body { height: 116px; display: flex; }
.group-label { text-align: center; line-height: 25px; color: #5c5c5c; }
.g-clip { width: 374px; }
.g-org { width: 274px; }
.g-new { width: 199px; }
.g-open { width: 186px; }
.g-org .group-label, .g-new .group-label, .g-open .group-label { padding-right: 4px; }
.g-sel { width: 124px; padding-left: 11px; }
.g-sel .group-label { padding-right: 15px; }
.lg { display: flex; flex-direction: column; align-items: center; padding-top: 6px; flex: none; }
.lg-icon { height: 46px; margin-bottom: 6px; display: flex; align-items: center; justify-content: center; }
.lg-label { text-align: center; line-height: 25px; white-space: nowrap; }
.w46 { width: 46px; }
.w52 { width: 52px; }
.w70 { width: 70px; }
.w72 { width: 72px; }
.w76 { width: 76px; }
.w102 { width: 102px; }
.off { color: #a3a3a3; }
.caret { width: 0; height: 0; border: 4px solid transparent; border-top: 5px solid #111; border-bottom: 0; }
.caret-in { margin: 0 0 4px 6px; }
.inner-sep { width: 2px; height: 100px; margin: 6px 0 0 10px; background: #e3e4e5; flex: none; }
.stack { display: flex; flex-direction: column; }
.st-clip { padding-top: 3px; }
.st-new { padding-top: 3px; }
.st-open { padding-top: 4px; }
.sm { height: 32px; display: flex; align-items: center; white-space: nowrap; }
.sm-t { height: 35.500px; }
.st-sel .sm { height: 32.500px; }
.sm-icon { width: 27px; flex: none; display: flex; }
.st-clip .sm-icon { padding-left: 1px; }

/* address */
.addr { height: 33px; margin-top: 8px; flex: none; display: flex; align-items: center; }
.nav-btn.back { margin-left: 18px; }
.nav-btn.fwd { margin-left: 26px; }
.nav-btn.hist { margin-left: 19px; }
.nav-btn.up { margin-left: 17px; margin-right: 10px; }
.crumbs { width: 1587px; height: 33px; border: 1px solid #d9d9d9; display: flex; align-items: center; gap: 11px; padding-left: 6px; color: #1a1a1a; flex: none; letter-spacing: .35px; }
.cr-folder { margin-right: 5px; }
.cr-drop { margin-left: auto; margin-right: -1px; }
.cr-refresh { width: 26px; height: 31px; border-left: 1px solid #d9d9d9; display: flex; align-items: center; justify-content: center; margin-left: -5px; }
.search { width: 151px; height: 33px; margin-left: 12px; border: 1px solid #d9d9d9; display: flex; align-items: center; justify-content: space-between; padding: 0 10px; color: #7a7a7a; flex: none; white-space: nowrap; }

/* main */
.main { height: 722px; flex: none; display: flex; }
.side { width: 342px; border-right: 1px solid #f0f0f0; padding-top: 34px; flex: none; }
.si { height: 36px; display: flex; align-items: center; padding-top: 2px; padding-left: 52px; width: 338px; white-space: nowrap; color: #1a1a1a; letter-spacing: .2px; }
.si.top { margin-top: 12px; padding-left: 38px; }
.si.top:first-child { margin-top: 0; }
.si.sel { background: #d9d9d9; }
.si-i { margin-right: 5px; }
.fold { width: 25px; height: 26px; position: relative; display: block; flex: none; }
.badge { position: absolute; left: 9px; bottom: 1px; }
.drv { position: absolute; left: -3px; bottom: 2px; }
.badge-win { position: absolute; left: -3px; top: 2px; }
.badge-cd { position: absolute; left: 3px; top: 0; }
.list { width: 973px; margin-left: 23px; flex: none; }
.head { margin-top: 10px; height: 39px; display: grid; grid-template-columns: 437px 203px 203px 135px; color: #4d6078; }
.hc { position: relative; padding: 10px 0 0 10px; border-right: 1px solid #e5e5e5; }
.hc-name { padding-left: 5px; }
.sort { position: absolute; left: 211px; top: 2px; }
.row { height: 32px; padding-top: 2px; display: grid; grid-template-columns: 437px 203px 203px 130px; align-items: center; color: #6d6d6d; }
.row > span { padding-left: 10px; white-space: nowrap; }
.row > .nm { display: flex; align-items: center; padding-left: 0; color: #111; letter-spacing: .28px; }
.row > .dt { letter-spacing: .6px; }
.row > .sz { text-align: right; padding: 0 5px 0 0; letter-spacing: .4px; }
.ic { width: 36px; display: flex; justify-content: center; flex: none; }
.chosen { background: #cce8ff; box-shadow: inset 0 0 0 1px #99d1ff; }
.vscroll { width: 25px; margin-left: auto; background: #f0f0f0; margin-top: 10px; display: flex; flex-direction: column; align-items: center; margin-right: 1px; }
.vs-up { margin-top: 11px; }
.vs-thumb { width: 24px; height: 138px; margin-top: 486px; background: #cdcdcd; }

/* status */
.status { height: 35px; padding-bottom: 2px; flex: none; display: flex; align-items: center; color: #3e5974; letter-spacing: .3px; }
.st-a { width: 121px; padding-left: 22px; border-right: 1px solid #e8e8e8; line-height: 22px; }
.st-b { padding: 0 16px; border-right: 1px solid #e8e8e8; line-height: 22px; }

/* taskbar */
.taskbar { height: 60px; flex: none; display: flex; background: #04161c; color: #fff; }
.tb { width: 75px; height: 60px; display: flex; align-items: center; justify-content: center; flex: none; }
.s72 { width: 72px; }
.s77 { width: 77px; justify-content: flex-start; padding-left: 24px; }
.s73 { width: 73px; padding-right: 2px; }
.active-exp { background: #33434b; box-shadow: inset 0 -3px 0 #76b9ed; }
.tb-mark { width: 61px; height: 60px; display: flex; align-items: center; justify-content: center; }
.mark-green { background: linear-gradient(to right, #2f6536 40px, #1d2d33 40px); box-shadow: inset 0 -3px 0 #4fe23c; }
.mark-blue { box-shadow: inset 0 -3px 0 #76b9ed; }
.ti { font-family: "Liberation Sans", "Noto Sans CJK SC", sans-serif; font-weight: bold; fill: #fff; }
.ti-a { font-size: 25px; fill: #e8f2ff; }
.ti-p { font-size: 20px; }
.ti-yd { font-size: 15px; }
.ti-iq { font-size: 13px; }
.ti-pc { font-size: 15px; }
.tray { margin-left: auto; margin-right: 32px; display: flex; align-items: center; }
.tr { width: 36px; display: flex; justify-content: center; flex: none; }
.tr-ime { width: 34px; font-size: 23px; color: #fff; }
.mr18 { margin-right: 18px; }
.mr7 { margin-right: 7px; }
.mr15 { margin-right: 15px; }
.s-mini { width: 21px; height: 22px; background: #f05a22; color: #fff; font: bold italic 17px/22px "Liberation Sans", sans-serif; text-align: center; border-radius: 3px; transform: rotate(-12deg); display: block; }
.clock { width: 105px; margin-right: 17px; display: flex; flex-direction: column; align-items: center; line-height: 28px; font-size: 19px; color: #fff; white-space: nowrap; }

/* overlays */
.gadget { position: absolute; left: 1906px; top: 921px; width: 14px; height: 62px; background: repeating-linear-gradient(to bottom, #3c424e 0 2px, #59606c 2px 4px); border-radius: 5px 0 0 0; }
.gadget::after { content: ""; position: absolute; left: 3px; right: 2px; bottom: 0; height: 18px; background: repeating-linear-gradient(to bottom, #a6c552 0 2px, #59606c 2px 3px); }
.gadget-v { position: absolute; left: 1901px; top: 968px; }
.sogou { position: absolute; left: 1643px; top: 982px; width: 277px; height: 38px; background: #fff; border-top: 1px solid #b8bcc2; display: flex; align-items: center; }
.sg-logo { position: absolute; left: -32px; top: -2px; width: 38px; height: 41px; background: #f2601d; color: #fff; font: italic bold 36px/41px "Liberation Sans", sans-serif; text-align: center; border-radius: 4px; transform: rotate(-13deg); }
.sg { width: 33px; display: flex; justify-content: center; flex: none; color: #1a7fd1; }
.sg:nth-child(2) { margin-left: 12px; }
.sg-ps { position: relative; left: 3px; }
.sg-zh { font-size: 24px; font-weight: 700; }
.sg-p { font-size: 24px; font-weight: 700; line-height: 26px; }
.watermark { position: absolute; left: 1676px; top: 1051px; font: 15.800px/20px "Liberation Sans", sans-serif; color: rgba(200, 200, 200, .62); white-space: nowrap; }
.marks { position: absolute; left: 0; top: 0; pointer-events: none; fill: none; stroke: #ffff00; stroke-width: 6; stroke-linecap: round; stroke-linejoin: round; }
```
